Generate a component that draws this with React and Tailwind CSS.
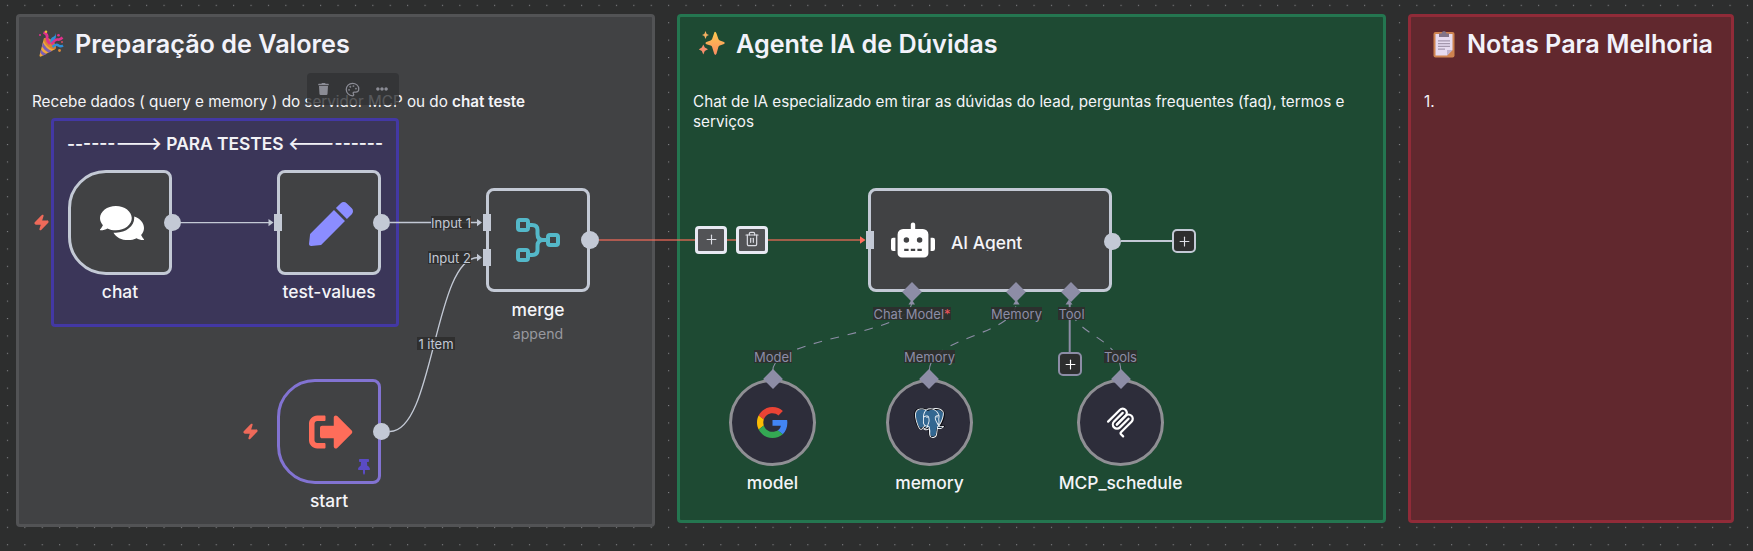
import { FaComments, FaPen, FaRobot, FaSignOutAlt, FaThumbtack, FaTrash, FaEllipsisH } from "react-icons/fa";
import { SiPostgresql } from "react-icons/si";
import { Palette, Plus, Trash2, Zap } from "lucide-react";

function PartyIcon() {
  return (
    <svg viewBox="0 0 26 28" className="h-[28px] w-[26px]">
      <path d="M6 8 L1.5 25.5 Q1.5 27 3 26.5 L17.5 19 Q16 12 6 8Z" fill="#f0a73c" />
      <path d="M5 12.5 Q8 19 14 21 L10.5 22.8 Q6 20 4 16.5Z" fill="#7a5fb5" />
      <path d="M3 19.5 Q5 23 8.5 24 L5.5 25.4 Q3 24.5 2.3 22.5Z" fill="#7a5fb5" />
      <ellipse cx="12" cy="13.5" rx="7.6" ry="3.6" transform="rotate(43 12 13.5)" fill="#d98432" />
      <path d="M5.5 2.5 Q10 4 9 8 Q9 11 12 14" stroke="#e0318c" strokeWidth="2.8" fill="none" />
      <path d="M17.5 1 Q18.5 6 14 7.5 Q12 9 12.5 13 Q17 11 18 7 Z" fill="#2f8fd8" />
      <path d="M13.5 14.5 Q17 9 20 9.5 Q22 10 24.5 7.5" stroke="#e0318c" strokeWidth="2.6" fill="none" />
      <path d="M14.5 17 Q18 13.5 20.5 15.5 Q22.5 17 25 15.5" stroke="#2f8fd8" strokeWidth="2.6" fill="none" />
      <circle cx="8" cy="1.8" r="1.3" fill="#f0b73c" />
      <circle cx="20.5" cy="5.3" r="1.3" fill="#e0318c" />
      <circle cx="2" cy="5" r="1" fill="#e0318c" />
      <circle cx="21.5" cy="20.5" r="1.4" fill="#d98a3a" />
      <circle cx="24" cy="12" r="1" fill="#d94c5c" />
    </svg>
  );
}

function SparklesIcon() {
  return (
    <svg viewBox="0 0 26 26" className="h-[26px] w-[26px]">
      <defs>
        <linearGradient id="spark" x1="0" y1="0" x2="0" y2="1">
          <stop offset="0" stopColor="#fbc84f" />
          <stop offset="1" stopColor="#fb8c62" />
        </linearGradient>
      </defs>
      <path d="M16 .8 Q17 .8 17.5 2.5 L19.3 7.8 Q19.7 9 20.8 9.4 L25 11 Q26.4 12 25 13 L20.8 14.6 Q19.7 15 19.3 16.2 L17.5 22.8 Q16.3 25 15.2 22.8 L13.2 16.2 Q12.8 15 11.6 14.6 L7.4 13.2 Q5.6 12.2 7.4 11 L11.6 9.4 Q12.8 9 13.2 7.8 L15 2.5 Q15.3 .8 16 .8Z" fill="url(#spark)" />
      <path d="M6.5 0 L7.7 2.9 L10 4 L7.7 5.1 L6.5 8 L5.3 5.1 L3 4 L5.3 2.9Z" fill="#f3b062" />
      <path d="M4.3 13.4 L5.8 16.6 L9 18.3 L5.8 20 L4.3 23.4 L2.8 20 L-.2 18.3 L2.8 16.6Z" fill="#f58e6c" />
    </svg>
  );
}

function ClipboardIcon() {
  return (
    <svg viewBox="0 0 22 27" className="ml-[3px] h-[27px] w-[22px]">
      <rect x=".5" y="1" width="21" height="25.5" rx="2" fill="#cf8350" />
      <path d="M2.500 3H19.500V19L14 24.500H2.500Z" fill="#e6daf0" />
      <path d="M14 24.500V19H19.500Z" fill="#bfb0cc" />
      <path d="M6 2.500H8.500Q8.800 0 11 0Q13.200 0 13.500 2.500H16V6H6Z" fill="#82748a" />
      <path d="M5 9.800H17M5 12.600H17M5 15.400H17M5 18.200H12" stroke="#a497ae" strokeWidth="1.2" />
    </svg>
  );
}

function GoogleIcon() {
  return (
    <svg viewBox="0 0 48 48" className="h-[31px] w-[31px]">
      <path fill="#EA4335" d="M24 9.5c3.54 0 6.71 1.22 9.21 3.6l6.85-6.85C35.9 2.38 30.47 0 24 0 14.62 0 6.51 5.38 2.56 13.22l7.98 6.19C12.43 13.72 17.74 9.5 24 9.5z" />
      <path fill="#4285F4" d="M46.98 24.55c0-1.57-.15-3.09-.38-4.55H24v9.02h12.94c-.58 2.96-2.26 5.48-4.78 7.18l7.73 6c4.51-4.18 7.09-10.36 7.09-17.65z" />
      <path fill="#FBBC05" d="M10.53 28.59c-.48-1.45-.76-2.99-.76-4.59s.27-3.14.76-4.59l-7.98-6.19C.92 16.46 0 20.12 0 24c0 3.88.92 7.54 2.56 10.78l7.97-6.19z" />
      <path fill="#34A853" d="M24 48c6.48 0 11.93-2.13 15.89-5.81l-7.73-6c-2.15 1.45-4.92 2.3-8.16 2.3-6.26 0-11.57-4.22-13.47-9.91l-7.98 6.19C6.51 42.62 14.62 48 24 48z" />
    </svg>
  );
}

function PostgresIcon() {
  return (
    <div className="grid h-[30px] w-[31px] *:col-start-1 *:row-start-1">
      <svg viewBox="0 0 31 30" className="h-[30px] w-[31px]">
        <path d="M5 1Q0 2 1 9Q3 19 6 20.5Q8 21 10 19Q12 21 15 20.5L15.5 27Q17 30 20 29Q23 28 23 24L23.5 20.5Q28 20.5 30 18.5L26 18Q31 9 30 5Q27 0 22 1.5Q18 0 14 2Q9 0 5 1Z" fill="#336791" stroke="#0b0b10" strokeWidth="1.6" />
      </svg>
      <SiPostgresql className="h-[30px] w-[31px] text-[#eef2f6]" />
    </div>
  );
}

function McpIcon() {
  return (
    <svg viewBox="0 0 180 180" className="h-[31px] w-[31px]" fill="none" stroke="#fff" strokeWidth="13" strokeLinecap="round">
      <path d="M18 84.8528L85.8822 16.9706C95.2548 7.59798 110.451 7.59798 119.823 16.9706C129.196 26.3431 129.196 41.5391 119.823 50.9117L68.5581 102.177" />
      <path d="M69.2652 101.47L119.823 50.9117C129.196 41.5391 144.392 41.5391 153.765 50.9117L154.118 51.2652C163.491 60.6378 163.491 75.8338 154.118 85.2063L92.7248 146.6C89.6006 149.724 89.6006 154.789 92.7248 157.913L105.331 170.52" />
      <path d="M102.853 33.9411L52.6482 84.1457C43.2756 93.5183 43.2756 108.714 52.6482 118.087C62.0208 127.459 77.2167 127.459 86.5893 118.087L136.794 67.8822" />
    </svg>
  );
}

function MergeIcon() {
  return (
    <svg viewBox="0 0 44 44" className="h-[44px] w-[44px]" fill="none" stroke="#54b8c9" strokeWidth="4">
      <rect x="2" y="2" width="10" height="10" rx="2" />
      <rect x="2" y="32" width="10" height="10" rx="2" />
      <rect x="32" y="17" width="10" height="10" rx="2" />
      <path d="M12 7H16Q21.500 7 21.500 12V16Q21.500 22 27 22H32M12 37H16Q21.500 37 21.500 32V28Q21.500 22 27 22" />
    </svg>
  );
}

function Sticky({ className, icon, title, children }) {
  return (
    <section className={`rounded-[4px] border-[3px] pt-[11px] ${className}`}>
      <h2 className="flex h-8 items-center pl-[6px] text-[25.2px] font-semibold whitespace-nowrap text-[#f2f2fa]">
        <span className="flex w-[37px] shrink-0 items-center">{icon}</span>
        <span className="pt-[2px]">{title}</span>
      </h2>
      <div className="pt-8 text-[15.24px] leading-[20.3px] text-[#f4f4f8]">{children}</div>
    </section>
  );
}

function Node({ place, shape, title, subtitle, ports, children }) {
  return (
    <figure className={`absolute flex flex-col items-center ${place}`}>
      <div className={`relative flex w-full shrink-0 items-center justify-center border-[3px] ${shape}`}>
        {children}
      </div>
      {title && (
        <figcaption className="flex flex-col items-center pt-[7px] whitespace-nowrap">
          <span className="text-[17.4px] leading-5 font-medium text-[#f4f4f8]">{title}</span>
          {subtitle && <span className="pt-[6px] text-[14.1px] leading-4 text-[#98999f]">{subtitle}</span>}
        </figcaption>
      )}
      {ports}
    </figure>
  );
}

function EdgeLabel({ className, children }) {
  return (
    <div className={`absolute flex h-[13px] items-center justify-center bg-[#2d2e2e]/90 pt-px text-[13px] leading-[15px] whitespace-nowrap ${className}`}>
      {children}
    </div>
  );
}

function Diamond({ className }) {
  return <div className={`absolute h-[14px] w-[14px] rotate-45 bg-[#8d8da6] ${className}`} />;
}

function Dot({ className }) {
  return <div className={`absolute rounded-full bg-[#c3c9d5] ${className}`} />;
}

function Port({ className }) {
  return <div className={`absolute w-2 bg-[#c3c9d5] ${className}`} />;
}

function Edges() {
  return (
    <svg viewBox="0 0 1753 551" className="absolute top-0 left-0 h-[551px] w-[1753px]" fill="none">
      <g stroke="#c3c9d5" strokeWidth="1.3">
        <path d="M180 222.700H270" />
        <path d="M390 222.500H478" />
        <path d="M390 431.500C434 431.500 434 257.500 478 257.500" />
      </g>
      <g fill="#c3c9d5">
        <path d="M268.500 219L273.500 222.600L268.500 226.200Z" />
        <path d="M477 219L482 222.600L477 226.200Z" />
        <path d="M477 253.800L482 257.500L477 261.200Z" />
      </g>
      <path d="M599 240H861" stroke="#ff6d5a" strokeOpacity=".58" strokeWidth="2" />
      <path d="M860 236.300L865.500 240L860 243.700Z" fill="#ff6d5a" />
      <path d="M1121 241H1173" stroke="#c3c9d5" strokeWidth="2" />
      <g stroke="#8d8da6">
        <path d="M1069.700 303V353" strokeWidth="2" />
        <g strokeWidth="1.1" strokeDasharray="8.7 8.7">
          <path d="M772.700 371C772.700 336 911.700 336 911.700 302" />
          <path d="M929.300 371C929.300 336 1016.300 336 1016.300 302" />
          <path d="M1120.700 371C1120.700 336 1069.500 336 1069.500 302" />
        </g>
      </g>
      <g fill="#8d8da6">
        <path d="M908.500 304.500L911.700 299.500L915 304.500Z" />
        <path d="M1013.100 304.500L1016.300 299.500L1019.600 304.500Z" />
        <path d="M1065.500 304.500L1069 299.500L1072.500 304.500Z" />
      </g>
    </svg>
  );
}

export default function App() {
  return (
    <main className="relative h-[551px] w-[1753px] overflow-hidden bg-[#2d2e2e] font-['Inter',sans-serif]">
      <svg className="absolute top-0 left-0 h-[551px] w-[1753px]">
        <pattern id="grid" x="6.9" y="4.8" width="17.4" height="17.4" patternUnits="userSpaceOnUse">
          <rect width="1.1" height="1.1" fill="#85868a" />
        </pattern>
        <rect width="1753" height="551" fill="url(#grid)" />
      </svg>

      <div className="relative flex items-start gap-[22px] pt-[14px] pl-4">
        <Sticky className="h-[513px] w-[639px] border-[#525355] bg-[#414244] pl-[13px]" icon={<PartyIcon />} title="Preparação de Valores">
          <p>
            Recebe dados ( query e memory ) do servidor MCP ou do <strong className="font-semibold">chat teste</strong>
          </p>
        </Sticky>
        <Sticky className="h-[509px] w-[709px] border-[#247650] bg-[#1e4a33] pr-5 pl-[13px]" icon={<SparklesIcon />} title="Agente IA de Dúvidas">
          <p>
            Chat de IA especializado em tirar as dúvidas do lead, perguntas frequentes (faq), termos e serviços
          </p>
        </Sticky>
        <Sticky className="h-[509px] w-[326px] border-[#902b38] bg-[#61282e] pl-[13px]" icon={<ClipboardIcon />} title="Notas Para Melhoria">
          <p>1.</p>
        </Sticky>
      </div>

      <section className="absolute top-[118px] left-[51px] h-[209px] w-[348px] rounded-[4px] border-[3px] border-[#4338a4] bg-[#3b3659] pt-3">
        <h4 className="text-center text-[17.36px] leading-[22px] font-semibold whitespace-nowrap text-[#f2f2f6]">
          {"---------> PARA TESTES <---------"}
        </h4>
      </section>

      <div className="absolute top-[73px] left-[307px] flex h-8 w-[92px] items-center justify-between rounded-[4px] bg-[#313234]/80 px-[11px] text-[#8b8c95]">
        <FaTrash className="h-[12px] w-[11px]" />
        <Palette className="h-[15px] w-[15px]" />
        <FaEllipsisH className="h-[12px] w-[12px]" />
      </div>

      <Edges />

      <Zap className="absolute top-[214px] left-[33px] h-[17px] w-[17px] fill-[#ee6a5a] text-[#ee6a5a]" />
      <Zap className="absolute top-[423px] left-[242px] h-[17px] w-[17px] fill-[#ee6a5a] text-[#ee6a5a]" />

      <Node
        place="top-[170px] left-[68px] w-[104px]"
        shape="h-[105px] rounded-l-[38px] rounded-r-[8px] border-[#c3c9d5] bg-[#414244] pl-1"
        title="chat"
        ports={<Dot className="top-[44px] left-[96px] h-[17px] w-[17px]" />}
      >
        <FaComments className="h-[44px] w-[44px] text-white" />
      </Node>

      <Node
        place="top-[170px] left-[277px] w-[104px]"
        shape="h-[105px] rounded-[8px] border-[#c3c9d5] bg-[#414244] pt-[2px] pl-[3px]"
        title="test-values"
        ports={
          <>
            <Port className="top-[44px] -left-[3px] h-[17px]" />
            <Dot className="top-[44px] left-[96px] h-[17px] w-[17px]" />
          </>
        }
      >
        <FaPen className="h-[44px] w-[44px] text-[#8b8dff]" />
      </Node>

      <Node
        place="top-[188px] left-[486px] w-[104px]"
        shape="mb-px h-[104px] rounded-[8px] border-[#c3c9d5] bg-[#414244]"
        title="merge"
        subtitle="append"
        ports={
          <>
            <Port className="top-[26px] -left-[3px] h-[17px]" />
            <Port className="top-[61px] -left-[3px] h-[17px]" />
            <Dot className="top-[43px] left-[95px] h-[18px] w-[18px]" />
          </>
        }
      >
        <MergeIcon />
      </Node>

      <Node
        place="top-[379px] left-[277px] w-[104px]"
        shape="h-[105px] rounded-l-[38px] rounded-r-[8px] border-[#8273d2] bg-[#414244] pl-[3px]"
        title="start"
        ports={<Dot className="top-[44px] left-[96px] h-[17px] w-[17px]" />}
      >
        <FaSignOutAlt className="h-[44px] w-[44px] text-[#ff6d5a]" />
        <FaThumbtack className="absolute right-[8px] bottom-[6px] h-[16px] w-[12px] text-[#5a4bc4]" />
      </Node>

      <Node
        place="top-[188px] left-[868px] w-[244px]"
        shape="h-[104px] rounded-[8px] border-[#c3c9d5] bg-[#414244]"
        ports={
          <>
            <Port className="top-[43px] -left-[2px] h-[18px]" />
            <Dot className="top-[45px] left-[236px] h-[17px] w-[17px]" />
            <Diamond className="top-[97px] left-[37px]" />
            <Diamond className="top-[97px] left-[141px]" />
            <Diamond className="top-[97px] left-[196px]" />
          </>
        }
      >
        <div className="flex w-full items-center pl-5">
          <FaRobot className="h-[44px] w-[44px] text-white" />
          <div className="ml-4 h-[22px] overflow-hidden pt-[2px] text-[17.4px] leading-[24px] font-medium text-[#f4f4f8]">AI Agent</div>
        </div>
      </Node>

      <Node
        place="top-[379px] left-[729px] w-[87px]"
        shape="h-[87px] rounded-full border-[#8f8f94] bg-[#2d2d3a]"
        title="model"
        ports={<Diamond className="-top-[7px] left-[37px]" />}
      >
        <GoogleIcon />
      </Node>
      <Node
        place="top-[379px] left-[886px] w-[87px]"
        shape="h-[87px] rounded-full border-[#8f8f94] bg-[#2d2d3a]"
        title="memory"
        ports={<Diamond className="-top-[7px] left-[36px]" />}
      >
        <PostgresIcon />
      </Node>
      <Node
        place="top-[379px] left-[1077px] w-[87px]"
        shape="h-[87px] rounded-full border-[#8f8f94] bg-[#2d2d3a]"
        title="MCP_schedule"
        ports={<Diamond className="-top-[7px] left-[37px]" />}
      >
        <McpIcon />
      </Node>

      <EdgeLabel className="top-[216px] left-[431px] w-[40px] text-[#c3c9d5]">Input 1</EdgeLabel>
      <EdgeLabel className="top-[251px] left-[428px] w-[43px] text-[#c3c9d5]">Input 2</EdgeLabel>
      <EdgeLabel className="top-[337px] left-[417px] w-[38px] text-[#c3c9d5]">1 item</EdgeLabel>
      <EdgeLabel className="top-[307px] left-[873px] w-[78px] text-[#8d8da6]">
        Chat Model<span className="text-[#f0545c]">*</span>
      </EdgeLabel>
      <EdgeLabel className="top-[307px] left-[991px] w-[51px] text-[#8d8da6]">Memory</EdgeLabel>
      <EdgeLabel className="top-[307px] left-[1058px] w-[27px] text-[#8d8da6]">Tool</EdgeLabel>
      <EdgeLabel className="top-[350px] left-[754px] w-[38px] text-[#8d8da6]">Model</EdgeLabel>
      <EdgeLabel className="top-[350px] left-[904px] w-[51px] text-[#8d8da6]">Memory</EdgeLabel>
      <EdgeLabel className="top-[350px] left-[1104px] w-[33px] text-[#8d8da6]">Tools</EdgeLabel>

      <div className="absolute top-[226px] left-[695px] flex gap-[9px] text-[#dcdde4]">
        <button className="flex h-7 w-8 items-center justify-center rounded-[4px] border-[3px] border-[#e8e9f3] bg-[#525356]">
          <Plus className="mb-[2px] h-[15px] w-[15px]" strokeWidth={1.8} />
        </button>
        <button className="flex h-7 w-8 items-center justify-center rounded-[4px] border-[3px] border-[#e8e9f3] bg-[#525356]">
          <Trash2 className="mb-[2px] h-[16px] w-[16px]" strokeWidth={1.8} />
        </button>
      </div>
      <button className="absolute top-[229px] left-[1172px] flex h-6 w-6 items-center justify-center rounded-[5px] border-2 border-[#c3c9d5] bg-[#2d2e2e] text-[#dcdde4]">
        <Plus className="h-[15px] w-[15px]" strokeWidth={1.8} />
      </button>
      <button className="absolute top-[352px] left-[1058px] flex h-6 w-6 items-center justify-center rounded-[5px] border-2 border-[#8d8da6] bg-[#2d2e2e] text-white">
        <Plus className="h-[15px] w-[15px]" strokeWidth={1.8} />
      </button>
    </main>
  );
}
